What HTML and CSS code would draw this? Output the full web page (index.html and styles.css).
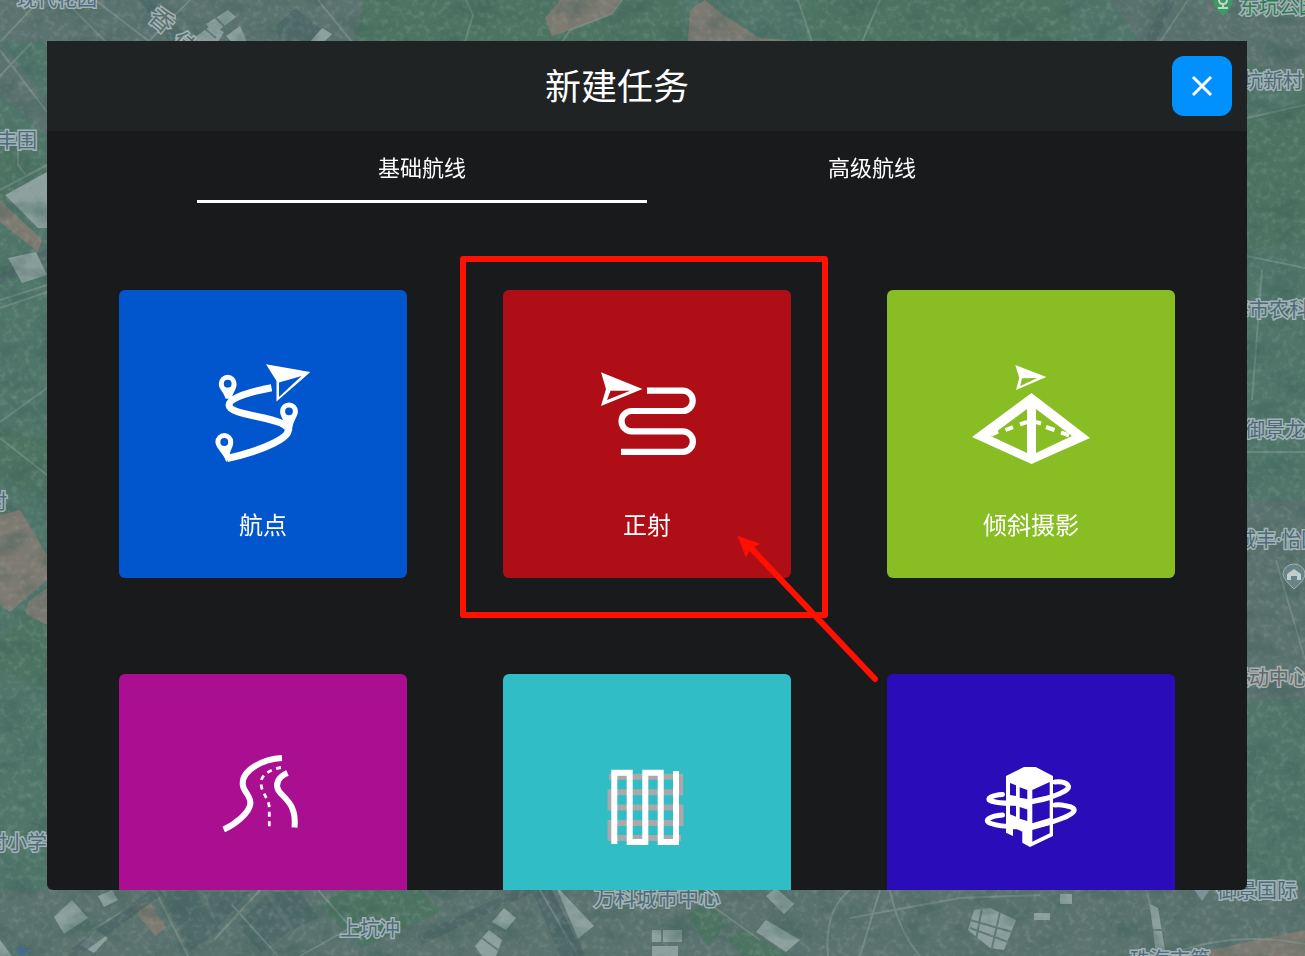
FILE: index.html
```
<!DOCTYPE html>
<html lang="zh-CN">
<head>
<meta charset="utf-8">
<title>新建任务</title>
<meta name="viewport" content="width=device-width, initial-scale=1">
<link rel="stylesheet" href="styles.css">
</head>
<body>
<svg class="map" viewBox="0 0 1305 956" preserveAspectRatio="xMidYMid slice" aria-hidden="true">
  <defs>
    <filter id="terrain" x="0" y="0" width="100%" height="100%" color-interpolation-filters="sRGB">
      <feTurbulence type="fractalNoise" baseFrequency="0.16" numOctaves="4" seed="7"/>
      <feColorMatrix values="0 0 0 0 0.62  0 0 0 0 0.68  0 0 0 0 0.66  2.4 0 0 0 -1.15"/>
    </filter>
    <filter id="shade" x="0" y="0" width="100%" height="100%" color-interpolation-filters="sRGB">
      <feTurbulence type="fractalNoise" baseFrequency="0.03 0.05" numOctaves="5" seed="21"/>
      <feColorMatrix values="0 0 0 0 0.22  0 0 0 0 0.36  0 0 0 0 0.33  0 2 0 0 -0.9"/>
    </filter>
  </defs>
  <rect width="1305" height="956" fill="#50766a"/>
  <g fill="#5b736f">
    <path d="M0 0H364L355 42H0z"/>
    <path d="M1110 0H1305V90L1247 60V42H1140z"/>
    <path d="M0 890H700L760 956H0z"/>
    <path d="M700 888H1305V956H720z"/>
    <path d="M1247 500H1305V700H1247z"/>
    <path d="M0 40L47 100V135L0 95z"/>
  </g>
  <g fill="#4d7463">
    <path d="M364 0H680L690 42H355z"/>
    <path d="M800 0H1070V42H810z"/>
    <path d="M1247 120L1305 100V240L1247 250z"/>
    <path d="M0 145L47 160V180L0 200z"/>
    <path d="M0 430L47 440V500L0 480z"/>
    <path d="M0 640L47 600V690L0 670z"/>
    <path d="M345 890H420L440 912L362 948L318 905z"/>
    <path d="M688 915L712 898L726 926L708 946z"/>
    <path d="M728 938L745 930L790 956H740z"/>
  </g>
  <g fill="#4f6a69">
    <path d="M160 892L195 890L220 930L190 952z"/>
    <path d="M205 892H250L218 926z"/>
    <path d="M237 925L266 895L290 930L262 953z"/>
    <path d="M272 892H300L318 918L294 929z"/>
    <path d="M140 0H150L193 42H170z"/>
    <path d="M0 275L47 248V262L0 284z"/>
    <path d="M532 890H552L582 956H560z"/>
    <path d="M276 26L296 8L326 34L318 42H280z"/>
  </g>
  <g fill="#7d7a71">
    <path d="M545 18L560 0H622L612 14L570 30L552 36z"/>
    <path d="M690 10L705 0L722 14L760 38L812 42H688z"/>
    <path d="M0 200L42 240L38 252L0 222z"/>
    <path d="M0 515L20 510L47 555V580L10 612L0 605z"/>
    <path d="M28 602L47 588V625L26 614z"/>
    <path d="M1210 950L1305 930V956H1200z"/>
    <path d="M130 905L150 902L166 928L155 936z"/>
  </g>
  <g fill="#8ca19e">
    <path d="M5 195L47 172V228L38 228z"/>
    <path d="M8 258L36 252L47 275L22 283z"/>
    <path d="M206 24L228 10L236 17L214 34z"/>
    <path d="M194 38L210 26L224 32L218 42H198z"/>
    <path d="M226 36L240 26L247 42H232z"/>
    <path d="M310 42L322 28L332 34L324 42z"/>
    <path d="M54 917L72 900L88 918L64 934z"/>
    <path d="M80 945L96 930L108 938L94 953z"/>
    <path d="M98 896L112 890L118 900L104 907z"/>
    <path d="M475 946L489 930L502 940L496 956H482z"/>
    <path d="M492 922L504 908L516 918L506 930z"/>
    <path d="M552 890L560 890L594 926L576 940z"/>
    <path d="M766 896L776 888L794 904L784 914z"/>
    <path d="M968 930L974 910L990 908L1016 920L1004 950L990 948z"/>
    <path d="M1150 904L1158 908L1166 956H1156z"/>
    <path d="M652 930H682V942H652z"/>
    <path d="M652 946H678V956H652z"/>
    <path d="M756 932L766 920L800 940L786 952z"/>
    <path d="M1060 894H1072V904H1060z"/>
    <path d="M1034 913H1050V920H1034z"/>
    <path d="M0 940L12 956H0z"/>
  </g>
  <path class="map__seams" d="M970 920L1012 932M970 928L1008 942M982 908L976 940M1000 912L992 948M482 938L498 950M214 16L228 30M204 28L216 38M662 930V942M1150 930H1164"/>
  <g class="map__roads">
    <path d="M95 0L150 42M64 0L106 42M40 0L0 42M190 0L148 42M318 0L352 42"/>
    <path d="M466 0L473 15L465 42M562 42L570 30L612 14L622 0"/>
    <path d="M798 0L812 42M880 0L862 42M1188 0L1160 42"/>
    <path d="M0 76L32 42M0 50L47 112M0 130L18 135V165L26 175M0 300L47 285M0 308L47 292"/>
    <path d="M0 422L47 388M0 438L47 475M0 190L47 165"/>
    <path d="M1247 118L1305 105M1247 256L1305 268M1262 270L1252 400M1276 560L1305 660M1247 452H1305"/>
    <path d="M155 890L188 956M260 890L214 940M232 905L278 956M300 956L350 928M318 890L362 940M92 930L150 895"/>
    <path d="M540 890L578 956M690 890L760 940M828 956Q824 910 850 890M880 890L860 956M890 890Q898 930 920 956M850 918L960 898L1040 895"/>
    <path d="M1148 895L1160 956M1166 956Q1230 930 1305 944"/>
  </g>
  <g class="map__rails">
    <path d="M1170 0L1150 42M70 956L160 890M420 940L530 888M552 890L580 956"/>
  </g>
  <path d="M14 950L24 946L30 952L22 956z" fill="#4770a1"/>
  <rect width="1305" height="956" filter="url(#terrain)" opacity=".3"/>
  <rect width="1305" height="956" filter="url(#shade)" opacity=".5"/>
  <path d="M1223 16Q1210 4 1214-4H1232Q1236 4 1223 16z" fill="#3f9a62"/>
  <path d="M1223 8V3M1218 8H1228M1219 0Q1219 4 1223 4Q1227 4 1227 0" fill="none" stroke="#c0d6cc" stroke-width="2"/>
  <path d="M1294 589Q1283 579 1283 574A11 10 0 0 1 1305 574Q1305 580 1294 589z" fill="#688489" stroke="#9bb0b2"/>
  <path d="M1287 574L1294 569L1301 574V580H1297V576H1291V580H1287z" fill="#c0cecd"/>
  <path d="M1193 888H1211L1202 901z" fill="#7c9299"/>
  <g class="map__labels">
    <text x="17" y="6">现代花园</text>
    <text class="map__road-name" x="148" y="28" transform="rotate(40 160 22)">香</text>
    <text class="map__road-name" x="172" y="51" transform="rotate(40 182 44)">佳</text>
    <text class="map__park" x="1239" y="14">东坑公园</text>
    <text x="1243" y="88">坑新村</text>
    <text x="-3" y="148">丰围</text>
    <text x="-13" y="509">村</text>
    <text x="-13" y="850">村小学</text>
    <text x="1229" y="317">海市农科</text>
    <text x="1245" y="437">御景龙湾</text>
    <text x="1236" y="547">城丰·怡园</text>
    <text class="map__venue" x="1229" y="685">运动中心</text>
    <text x="1217" y="898">御景国际</text>
    <text x="1130" y="967">珠海市第</text>
    <text class="map__large" x="594" y="905">万科城市中心</text>
    <text x="340" y="936">上坑冲</text>
  </g>
</svg>

<main class="page">
  <section class="dialog" role="dialog" aria-labelledby="dialog-title">
    <header class="dialog__header">
      <h1 class="dialog__title" id="dialog-title">新建任务</h1>
      <button class="close" type="button">
        <svg class="close__icon" viewBox="0 0 24 24" aria-hidden="true"><path d="M3 3L21 21M21 3L3 21"/></svg>
      </button>
    </header>
    <div class="tabs" role="tablist">
      <button class="tab tab--active" type="button" role="tab" aria-selected="true">基础航线</button>
      <button class="tab" type="button" role="tab" aria-selected="false">高级航线</button>
    </div>
    <div class="tasks">
      <button class="card card--waypoint" type="button">
        <svg class="card__icon" viewBox="0 0 120 120" aria-hidden="true">
          <path class="line" stroke-width="7" d="M68.500 33.700C51 37 26 43 26 51C26 60 61 62 78 69C91 75 85 82 71 89C57 96 40 101 24 104.500"/>
          <path class="solid" d="M24.700 20.800a8.900 8.900 0 0 1 8.900 8.900c0 6-4 9-5 15h-6c-2-7-6.800-9-6.800-15a8.900 8.900 0 0 1 8.900-8.900zm0 5a3.900 3.900 0 1 0 0 7.800a3.900 3.900 0 1 0 0-7.800z"/>
          <path class="solid" d="M86 48.400a8.900 8.900 0 0 1 8.900 8.900c0 6-5.400 9-5.900 20l-6-2c-1-9-5.900-12-5.900-18a8.900 8.900 0 0 1 8.900-8.900zm0 5a3.900 3.900 0 1 0 0 7.800a3.900 3.900 0 1 0 0-7.800z"/>
          <path class="solid" d="M21.300 79.100a8.900 8.900 0 0 1 8.900 8.900c0 6-3.500 8-3.500 14l-3.500 6c-2-8-10.800-14-10.800-20a8.900 8.900 0 0 1 8.900-8.900zm0 5a3.900 3.900 0 1 0 0 7.800a3.900 3.900 0 1 0 0-7.800z"/>
          <path class="solid" d="M63 10.300L107.300 18L73.500 47.600V27zM76 28.400V43L98.500 22z"/>
        </svg>
        <span class="card__label">航点</span>
      </button>
      <button class="card card--ortho" type="button">
        <svg class="card__icon" viewBox="0 0 120 120" aria-hidden="true">
          <path class="solid" d="M14 18.300L55.500 35L14 52L19 35zM23.500 36.700L20 46L43 36.700z"/>
          <path class="line" stroke-width="6.200" d="M60 36.700H95.600a10.150 10.150 0 0 1 0 20.300H44.700a10.150 10.150 0 0 0 0 20.300H95.600a10.300 10.300 0 0 1 0 20.600H34"/>
        </svg>
        <span class="card__label">正射</span>
      </button>
      <button class="card card--oblique" type="button">
        <svg class="card__icon" viewBox="0 0 120 120" aria-hidden="true">
          <path class="solid" d="M44.300 11L75.300 23L45 36L48.300 23.700zM51 24.300L49.300 32L66.300 24z"/>
          <path class="solid" d="M60.500 39L119 84L60.500 110L1 83zM56 55L19.500 82L56 99zM65 55V99L101 82z"/>
          <path class="line" stroke-width="4" d="M20 81L27 77.500M34.500 76L42 73.200M49 70.300L56 68M65 68L70 69.500M75 73L83.500 76M90 78.500L98 81.300"/>
        </svg>
        <span class="card__label">倾斜摄影</span>
      </button>
      <button class="card card--corridor" type="button">
        <svg class="card__icon" viewBox="0 0 120 120" aria-hidden="true">
          <path class="line" stroke-width="6" d="M79 20C60 21 39 32 39.700 46C40 54 48.500 58 47.300 66C46 75 33 86 20.700 91.500"/>
          <path class="line" stroke-width="6" d="M84.500 35C75 39 72 46 75.500 52.500C80 60 94 65 91.500 89.500"/>
          <path class="line" stroke-width="2.800" stroke-dasharray="5 4.600" d="M78 29.500C68 31 57 37 58 46C59 56 66.300 61 66.300 70V89"/>
        </svg>
      </button>
      <button class="card card--grid" type="button">
        <svg class="card__icon" viewBox="0 0 120 120" aria-hidden="true">
          <path class="grid-under" d="M22 38.700H93.200V54.300H23.500V69.500H93.500V85H23.500V100H94"/>
          <path class="line" stroke-width="6" d="M27.300 106V34.700H42.700V104H58.300V34.700H73.700V104H89V33"/>
        </svg>
      </button>
      <button class="card card--building" type="button">
        <svg class="card__icon" viewBox="0 0 120 120" aria-hidden="true">
          <path class="solid" d="M35 38L53 29H64.700L82 38V98L59 109L51.300 104.700V93.700L42 89.300V98L35 94.700zM39 45V57L45 58V47.300zM48.700 49.300V59.700L56.300 61V52zM39 66.300V76.300L45 78.700V67.700zM48.700 69V80.700L56.300 83V71.500zM61.300 52V60.700L78.700 57V44zM61.300 66V85.300L78.700 80V61zM61.300 92V103.700L78.700 95.300V87z"/>
          <path class="line line--round" stroke-width="5" d="M31.500 56.500C22 57 14 60.500 20 63C35 67.500 68 65 84 57.500C96 53 101 49 95 45.500C92 44 88 43.500 84 44"/>
          <path class="line line--round" stroke-width="5" d="M31.500 77C20 78 11 82 20 85.500C36 91 70 89 88 81.500C106 75 107 70 96 68C92 67 88 66.500 84 67"/>
        </svg>
      </button>
    </div>
    <svg class="callout" viewBox="0 0 420 430" aria-hidden="true">
      <rect x="3" y="3" width="362" height="356"/>
      <path d="M415 423L290 291"/>
      <path class="callout__head" d="M278.500 280.500L299 288L291 292L286 300z"/>
    </svg>
  </section>
</main>
</body>
</html>
```
FILE: styles.css
```
* {
  box-sizing: border-box;
}

body {
  margin: 0;
  overflow: hidden;
  background: #50766a;
  color: #fff;
  font-family: "Noto Sans CJK SC", sans-serif;
}

button {
  margin: 0;
  padding: 0;
  border: 0;
  background: none;
  color: inherit;
  font: inherit;
  cursor: pointer;
}

.map {
  position: fixed;
  inset: 0;
  width: 100%;
  height: 100%;
}

.map__roads path {
  fill: none;
  stroke: #8a9e98;
  stroke-width: 2;
  opacity: 0.5;
}

.map__rails path {
  fill: none;
  stroke: #4d6566;
  stroke-width: 10;
  opacity: 0.7;
}

.map__seams {
  fill: none;
  stroke: #5f7a78;
  stroke-width: 2;
}

.map__labels {
  fill: #4d6b7a;
  stroke: #a2b3b5;
  stroke-width: 3px;
  paint-order: stroke;
  font-family: "Noto Sans", "Noto Sans CJK SC", sans-serif;
  font-size: 20px;
}

.map__labels .map__park {
  fill: #2e7a52;
}

.map__labels .map__venue {
  fill: #6c6662;
}

.map__labels .map__large {
  font-size: 21px;
}

.map__labels .map__road-name {
  fill: #5a706e;
  font-size: 24px;
}

.page {
  position: relative;
  display: flex;
  height: 100vh;
  padding: 41px 58px 66px 47px;
}

.dialog {
  position: relative;
  display: flex;
  flex: 1;
  flex-direction: column;
  min-width: 0;
  overflow: hidden;
  border-radius: 0 0 6px 6px;
  background: #191a1c;
}

.dialog__header {
  display: flex;
  flex: none;
  align-items: center;
  padding: 15px;
  background: #1f2323;
}

.dialog__title {
  flex: 1;
  margin: 0;
  padding-bottom: 5px;
  font-size: 36px;
  font-weight: 400;
  line-height: 48px;
  text-align: center;
}

.close {
  display: grid;
  place-items: center;
  width: 60px;
  height: 60px;
  border-radius: 12px;
  background: #0091ff;
}

.close__icon {
  width: 24px;
  height: 24px;
  fill: none;
  stroke: #fff;
  stroke-width: 3;
}

.tabs {
  display: flex;
  flex: none;
  padding: 0 150px;
}

.tab {
  flex: 1;
  height: 72px;
  border-bottom: 3px solid transparent;
  font-size: 22px;
  line-height: 32px;
}

.tab--active {
  border-bottom-color: #fff;
}

.tasks {
  display: grid;
  flex: 1;
  grid-template-columns: repeat(3, 1fr);
  align-content: start;
  gap: 96px;
  min-height: 0;
  overflow: hidden;
  padding: 87px 72px 0;
}

.card {
  display: flex;
  flex-direction: column;
  align-items: center;
  gap: 34px;
  aspect-ratio: 1;
  padding-top: 64px;
  border-radius: 6px;
}

.card__icon {
  flex: none;
  width: 120px;
  height: 120px;
}

.card__label {
  font-size: 24px;
  line-height: 32px;
}

.card--waypoint { background: #0256cd; }
.card--ortho { background: #b00e17; }
.card--oblique { background: #89bd24; }
.card--corridor { background: #aa0f91; }
.card--grid { background: #31bdc6; }
.card--building { background: #2a0cb8; }

.solid {
  fill: #fff;
  fill-rule: evenodd;
}

.line {
  fill: none;
  stroke: #fff;
}

.line--round {
  stroke-linecap: round;
}

.grid-under {
  fill: none;
  stroke: #aaa8a8;
  stroke-width: 6;
}

.callout {
  position: absolute;
  top: 215px;
  left: calc(50% - 187px);
  width: 420px;
  height: 430px;
  fill: none;
  stroke: #ff1000;
  stroke-width: 6;
  stroke-linecap: round;
  stroke-linejoin: round;
  pointer-events: none;
}

.callout__head {
  fill: #ff1000;
  stroke-width: 1;
}
```
